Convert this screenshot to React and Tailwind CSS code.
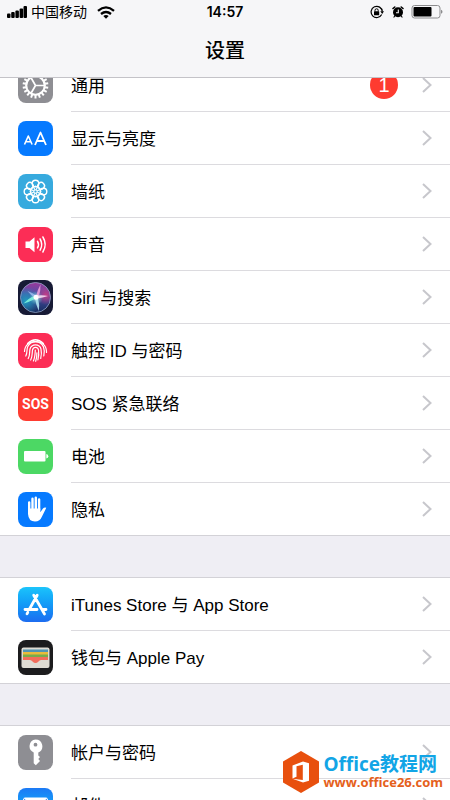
import clsx from 'clsx';

const petals = [0, 45, 90, 135, 180, 225, 270, 315];
const teeth = Array.from({ length: 18 }, (_, i) => i * 20);

const Tile = ({ className, children }) => (
  <svg viewBox="0 0 35 35" className={clsx('size-[35px] shrink-0 rounded-lg', className)} fill="none" aria-hidden="true">
    {children}
  </svg>
);

const GeneralIcon = () => (
  <Tile className="bg-[#8e8e93]">
    <g stroke="#fff">
      <circle cx="17.5" cy="17.5" r="9.3" strokeWidth="2.2" />
      {teeth.map((a) => (
        <path key={a} d="M17.5 7.8V4.6" strokeWidth="2" transform={`rotate(${a} 17.5 17.5)`} />
      ))}
      <path d="M17.5 17.5h9M17.5 17.5l-4.6-8M17.5 17.5l-4.6 8" strokeWidth="1.7" />
    </g>
  </Tile>
);

const DisplayIcon = () => (
  <Tile className="bg-[#067aff]">
    <g stroke="#fff" strokeLinejoin="round">
      <path d="M6.5 23.5l3.800-8.500 3.800 8.500M7.900 20.700h4.800" strokeWidth="1.600" />
      <path d="M17 24l5.500-12.500L28 24M18.900 20h7.200" strokeWidth="1.800" />
    </g>
  </Tile>
);

const WallpaperIcon = () => (
  <Tile className="bg-[#37aade]">
    <g stroke="#fff" strokeWidth="1.4">
      {petals.map((a) => (
        <g key={a} transform={`rotate(${a} 17.5 17.5)`}>
          <circle cx="17.5" cy="9.5" r="3.3" />
          <ellipse cx="17.5" cy="13.9" rx="1.5" ry="2" strokeWidth="0.8" />
        </g>
      ))}
    </g>
    <circle cx="17.5" cy="17.5" r="1.500" fill="#37aade" stroke="#fff" />
  </Tile>
);

const SoundIcon = () => (
  <Tile className="bg-[#fc2d56]">
    <path d="M7.5 14.500h4l5-4.200v14.900l-5-4.200h-4z" fill="#fff" />
    <g stroke="#fff" strokeWidth="1.500" strokeLinecap="round">
      <path d="M19.500 14.300q2 3.300 0 6.600" />
      <path d="M22.100 12q3.300 5.600 0 11.200" />
      <path d="M24.900 10q4.600 7.500 0 15" />
    </g>
  </Tile>
);

const SiriIcon = () => (
  <Tile className="bg-[#171a35]">
    <defs>
      <linearGradient id="siriBase" x1="18" y1="2" x2="18" y2="33" gradientUnits="userSpaceOnUse">
        <stop stopColor="#a0379a" />
        <stop offset=".4" stopColor="#4b4fa8" />
        <stop offset="1" stopColor="#142c5c" />
      </linearGradient>
      <radialGradient id="siriTeal" cx="8" cy="21" r="14" gradientUnits="userSpaceOnUse">
        <stop stopColor="#1f9cc0" />
        <stop offset="1" stopColor="#1f9cc0" stopOpacity="0" />
      </radialGradient>
      <radialGradient id="siriPink" cx="28" cy="15" r="10" gradientUnits="userSpaceOnUse">
        <stop stopColor="#c43c86" />
        <stop offset="1" stopColor="#c43c86" stopOpacity="0" />
      </radialGradient>
      <radialGradient id="siriGlow" cx="18" cy="18" r="7" gradientUnits="userSpaceOnUse">
        <stop stopColor="#d9fff8" />
        <stop offset="1" stopColor="#59e0d4" stopOpacity="0" />
      </radialGradient>
    </defs>
    <circle cx="17.5" cy="17.5" r="15" fill="url(#siriBase)" />
    <circle cx="17.5" cy="17.5" r="15" fill="url(#siriTeal)" />
    <circle cx="17.5" cy="17.5" r="15" fill="url(#siriPink)" />
    <circle cx="18" cy="18" r="7" fill="url(#siriGlow)" opacity=".8" />
    <circle cx="17.5" cy="17.5" r="15" stroke="#8fa3c6" strokeWidth=".8" />
    <path d="M16 19.500q-5 2.500-10.500 4 4-4.500 10-7.500z" fill="#7df3dc" opacity=".9" />
    <path d="M18 16.500q1.500-7 4.500-12 .3 7-1.800 12z" fill="#f0a3dc" opacity=".85" />
    <path d="M19 15.500q6-.8 11 .5-5 1.800-11 2.500z" fill="#f7dcf2" opacity=".9" />
    <path d="M17 18.500h3q1.800 6 .8 12.500-2.800-6-3.800-12.500z" fill="#b9ecf7" opacity=".85" />
    <path d="M16.500 17.500q-4-2.500-7-6.500 5 1.800 8.500 4.500z" fill="#a9c4f5" opacity=".75" />
    <circle cx="18" cy="17.300" r="2.500" fill="#fff" />
  </Tile>
);

const TouchIcon = () => (
  <Tile className="bg-[#fc2d56]">
    <g stroke="#fff" strokeWidth="1.2" strokeLinecap="round">
      <path d="M9.500 10.500q8-7.500 16 0" />
      <path d="M6.500 18.500C7 5 28 5 28.500 18.500v1" />
      <path d="M7.800 23c2-4 .5-6.500 2-9.500 3-6.300 13-6.300 15.700.5 1 2.500 1 5.500.3 9" />
      <path d="M10.200 25.500c2.200-4 1-6.500 1.800-9.500 1.700-5.500 9.500-5.500 11 0 .7 3 .5 6-.3 9.500" />
      <path d="M12.700 27c2-4 1.300-7 1.800-10 .8-3.500 5.300-3.500 6 0 .5 3 .3 6-.6 9.800" />
      <path d="M15.400 28c1.600-3.500 1.800-7 1.900-11M17.700 28.300c1-3 1.200-6 1.200-8.500" />
    </g>
  </Tile>
);

const SosIcon = () => (
  <span className="flex size-[35px] shrink-0 items-center justify-center rounded-lg bg-[#fe3b30] font-['Roboto',sans-serif] text-sm font-bold text-white">
    SOS
  </span>
);

const BatteryIcon = () => (
  <Tile className="bg-[#4cd864]">
    <rect x="6" y="12" width="21.500" height="10.500" rx="1" fill="#fff" />
    <path d="M28.300 15q2 .3 2 2.200t-2 2.300z" fill="#fff" />
  </Tile>
);

const PrivacyIcon = () => (
  <Tile className="bg-[#067aff]">
    <g stroke="#fff" strokeWidth="2.400" strokeLinecap="round">
      <path d="M11.200 19V10.500M14.500 17V6.800M17.800 17V5.800M21.100 18V7.500" />
    </g>
    <path d="M10 16.500h12.300v3.700l2.700-3.700q1.300-1.300 3.300-.7l-4.300 8.700q-2 5-7 5-6.500 0-7-7.500z" fill="#fff" />
  </Tile>
);

const StoreIcon = () => (
  <Tile className="bg-linear-to-b from-[#1cc4fb] to-[#1d6cf0]">
    <g stroke="#fff" strokeWidth="2.800" strokeLinecap="round">
      <path d="M19.200 8.300L11.500 22M15.700 8.300L26.500 27M7 22.500h12M24.500 22.500H28M9.800 25.300L9 26.800" />
    </g>
  </Tile>
);

const WalletIcon = () => (
  <Tile className="bg-[#1c1c1e]">
    <rect x="3.500" y="7.500" width="28" height="20.500" rx="2" fill="#dfdcd3" />
    <path d="M5 9.500h25v3H5z" fill="#4f94b4" />
    <path d="M5 12h25v3H5z" fill="#e9bb3a" />
    <path d="M5 14.500h25v3H5z" fill="#78ad4a" />
    <path d="M5 17h25v3h-7q-1.500 0-2.500 1.500-3 3-6 0Q13.500 20 12 20H5z" fill="#f26d5b" />
  </Tile>
);

const KeyIcon = () => (
  <Tile className="bg-[#8e8e93]">
    <path fillRule="evenodd" d="M17.500 4.500a6.800 6.800 0 0 1 2.800 13v3l1.700 1.500-1.700 2 1.700 2-1.700 1.800-2.500 2.400-2.100-2v-10.700a6.800 6.800 0 0 1 1.800-13zM17.500 7.800a1.900 1.900 0 1 0 0 3.800 1.900 1.900 0 0 0 0-3.800z" fill="#fff" />
  </Tile>
);

const MailIcon = () => (
  <Tile className="bg-linear-to-b from-[#1c79f5] to-[#1dc8fb]">
    <rect x="5" y="9.500" width="25" height="17" rx="2" fill="#fff" />
    <path d="M5.500 10.500l10 9q2 1.600 4 0l10-9M5.500 26l8-8M29.500 26l-8-8" stroke="#3d8ff5" strokeWidth="1" />
  </Tile>
);

const groups = [
  [
    { label: '通用', icon: GeneralIcon, badge: 1 },
    { label: '显示与亮度', icon: DisplayIcon },
    { label: '墙纸', icon: WallpaperIcon },
    { label: '声音', icon: SoundIcon },
    { label: 'Siri 与搜索', icon: SiriIcon },
    { label: '触控 ID 与密码', icon: TouchIcon },
    { label: 'SOS 紧急联络', icon: SosIcon },
    { label: '电池', icon: BatteryIcon },
    { label: '隐私', icon: PrivacyIcon },
  ],
  [
    { label: 'iTunes Store 与 App Store', icon: StoreIcon },
    { label: '钱包与 Apple Pay', icon: WalletIcon },
  ],
  [
    { label: '帐户与密码', icon: KeyIcon },
    { label: '邮件', icon: MailIcon },
  ],
];

const StatusBar = () => (
  <div className="grid h-6 grid-cols-[1fr_auto_1fr] items-center px-[7px] font-['Inter','Noto_Sans_CJK_SC',sans-serif]">
    <div className="flex items-center">
      <svg viewBox="0 0 20 12" className="h-3 w-5" aria-hidden="true">
        <rect x="0" y="7.500" width="3.500" height="4.500" rx="1" />
        <rect x="4.200" y="6" width="3.500" height="6" rx="1" />
        <rect x="8.400" y="4.500" width="3.500" height="7.500" rx="1" />
        <rect x="12.600" y="2.500" width="3.500" height="9.500" rx="1" />
        <rect x="16.500" y="0" width="3.500" height="12" rx="1" />
      </svg>
      <span className="ml-1 text-sm">中国移动</span>
      <svg viewBox="0 0 18 13" className="ml-2.5 h-[13px] w-[18px]" fill="none" stroke="#000" strokeWidth="2.300" aria-hidden="true">
        <path d="M1 4.800q8-6.800 16 0M4 8q5-4 10 0" />
        <path d="M9 12.800L6.300 10q2.700-2 5.400 0z" fill="#000" stroke="none" />
      </svg>
    </div>
    <span className="text-sm font-semibold">14:57</span>
    <div className="flex items-center justify-end">
      <svg viewBox="0 0 14 14" className="size-3.5" fill="none" aria-hidden="true">
        <path d="M11.700 9.500A5.600 5.600 0 1 1 12.300 6.500" stroke="#000" strokeWidth="1.200" />
        <path d="M10.300 6.300h3.700l-1.800 2.700z" fill="#000" />
        <rect x="4" y="6.300" width="5.200" height="4" rx=".5" fill="#000" />
        <path d="M5 6.500V5.300q0-1.500 1.600-1.500t1.600 1.500v1.200" stroke="#000" />
      </svg>
      <svg viewBox="0 0 14 14" className="ml-[7px] size-3.5" fill="none" aria-hidden="true">
        <circle cx="7" cy="7.300" r="5" fill="#000" />
        <path d="M2 3.500l1.800-1.500M12 3.500L10.200 2" stroke="#000" strokeWidth="1.600" strokeLinecap="round" />
        <path d="M3.800 11l-.8 1M10.200 11l.8 1" stroke="#000" strokeWidth="1.200" strokeLinecap="round" />
        <path d="M7.300 4.500v3.300H5" stroke="#f5f5f7" strokeWidth="1.100" />
      </svg>
      <svg viewBox="0 0 32 14" className="ml-1.5 h-3.5 w-8" fill="none" aria-hidden="true">
        <rect x="1" y=".5" width="28" height="12.500" rx="2.500" stroke="#8b8b8d" />
        <rect x="2.500" y="2" width="18" height="9.500" rx="1" fill="#000" />
        <path d="M30 4.800q1.500.5 1.500 2t-1.500 2z" fill="#8b8b8d" />
      </svg>
    </div>
  </div>
);

const Row = ({ item, last }) => {
  const Icon = item.icon;

  return (
    <li>
      <a href="#" className="flex items-stretch gap-[18px] pl-[18px]">
        <span className="flex items-center">
          <Icon />
        </span>
        <span className={clsx('flex flex-1 items-center border-[#dcdbdf] pr-[18px]', !last && 'border-b')}>
          <span className="flex h-[52px] flex-1 items-center pt-1 text-[17px]">{item.label}</span>
          {item.badge && (
            <span className="mr-6 flex size-7 items-center justify-center rounded-full bg-[#fe3b30] text-xl text-white">
              {item.badge}
            </span>
          )}
          <svg viewBox="0 0 10 16" className="h-4 w-2.5" fill="none" stroke="#c7c7cc" strokeWidth="2" aria-hidden="true">
            <path d="M1 1l7.500 7L1 15" />
          </svg>
        </span>
      </a>
    </li>
  );
};

const Watermark = () => (
  <div className="absolute right-[7px] bottom-[7px] z-20 flex items-center gap-1">
    <svg viewBox="0 0 36 42" className="h-[42px] w-9" aria-hidden="true">
      <path d="M18 0l18 10.500v21L18 42 0 31.500v-21z" fill="#e8500e" />
      <path fillRule="evenodd" d="M9.500 14.500L20 10.500l6 1.700v17.600l-6 1.700-10.500-3.700 10.300 1.200V13.800l-6.300 1.500v10.500l-4 1.800z" fill="#fff" />
    </svg>
    <div className="flex flex-col font-['Open_Sans','Noto_Sans_CJK_SC',sans-serif] font-bold">
      <span className="text-[19px] leading-5 text-[#12a5e6]">Office教程网</span>
      <span className="text-[13px] leading-4 text-[#e5601b]">www.office26.com</span>
    </div>
  </div>
);

export default function App() {
  return (
    <div className="relative h-screen overflow-hidden bg-[#efeef4] font-['Liberation_Sans','Noto_Sans_CJK_SC',sans-serif] text-black">
      <header className="relative z-10 border-b border-[#c4c3c8] bg-[#f6f6f8]">
        <StatusBar />
        <h1 className="flex h-[53px] items-center justify-center text-xl font-medium">设置</h1>
      </header>

      {/* first row is scrolled partly under the header */}
      <main className="-mt-[19px] flex flex-col gap-[41px]">
        {groups.map((items, i) => (
          <ul key={i} className={clsx('border-b border-[#d3d2d7] bg-white', i > 0 && 'border-t')}>
            {items.map((item, j) => (
              <Row key={item.label} item={item} last={j === items.length - 1} />
            ))}
          </ul>
        ))}
      </main>

      <Watermark />
    </div>
  );
}
